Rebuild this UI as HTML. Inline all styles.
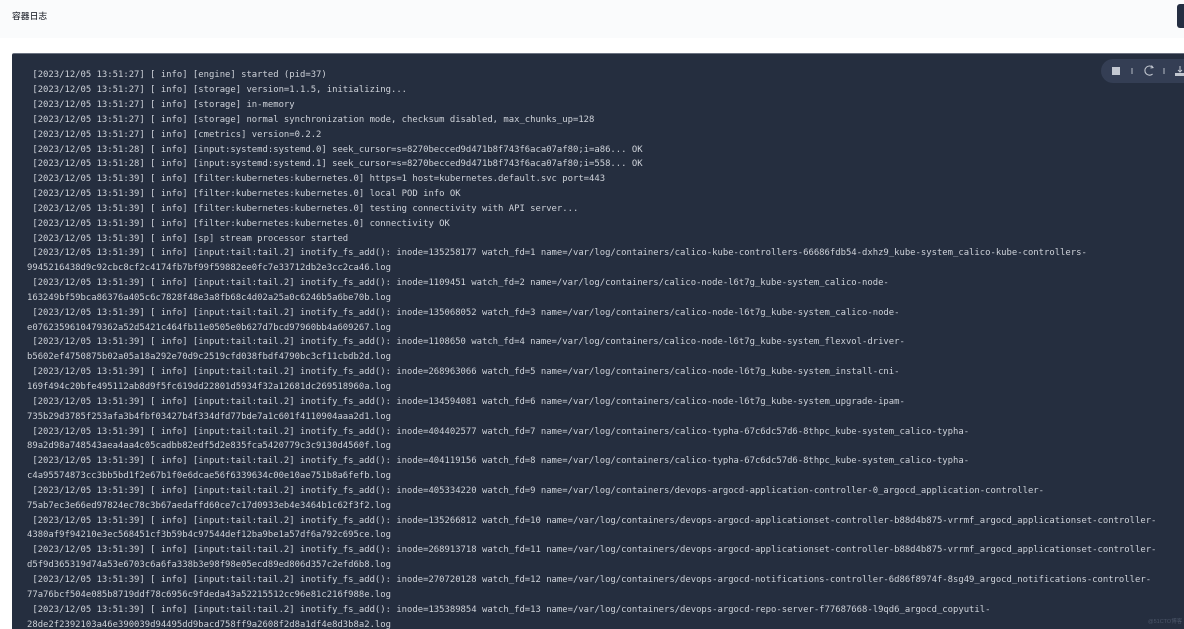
<!DOCTYPE html>
<html><head><meta charset="utf-8"><title>容器日志</title>
<style>
html,body{margin:0;padding:0;width:1184px;height:629px;overflow:hidden;background:#fff}
#hd{position:absolute;left:0;top:0;width:1184px;height:38px;background:#fafbfc}
#ttl{position:absolute;left:12px;top:10px;font:500 8.8px/13px "Liberation Sans","Noto Sans CJK SC",sans-serif;color:#30343c;filter:blur(.25px)}
#btn{position:absolute;left:1177px;top:4px;width:20px;height:24px;border-radius:3px;background:#242e42}
#panel{position:absolute;left:12px;top:53px;width:1172px;height:576px;background:#252e3f;border-radius:2px 0 0 0;border-top:1px solid #6b7280;box-sizing:border-box;overflow:hidden}
#log{position:absolute;left:15px;top:14.3px;margin:0;font:8.905px/14.84px "DejaVu Sans Mono","Liberation Mono",monospace;color:#ced2d9;white-space:pre;filter:blur(.3px)}
#tb{position:absolute;left:1101px;top:59px;width:95px;height:24px;border-radius:12px;background:#343e54}
#wm{position:absolute;left:1148px;top:618px;font:5.5px/8px "Liberation Sans","Noto Sans CJK SC",sans-serif;color:#4d576a}
svg{position:absolute;left:1101px;top:59px}
</style></head><body>
<div id="hd"></div>
<div id="ttl">容器日志</div>
<div id="btn"></div>
<div id="panel"><pre id="log"> [2023/12/05 13:51:27] [ info] [engine] started (pid=37)
 [2023/12/05 13:51:27] [ info] [storage] version=1.1.5, initializing...
 [2023/12/05 13:51:27] [ info] [storage] in-memory
 [2023/12/05 13:51:27] [ info] [storage] normal synchronization mode, checksum disabled, max_chunks_up=128
 [2023/12/05 13:51:27] [ info] [cmetrics] version=0.2.2
 [2023/12/05 13:51:28] [ info] [input:systemd:systemd.0] seek_cursor=s=8270becced9d471b8f743f6aca07af80;i=a86... OK
 [2023/12/05 13:51:28] [ info] [input:systemd:systemd.1] seek_cursor=s=8270becced9d471b8f743f6aca07af80;i=558... OK
 [2023/12/05 13:51:39] [ info] [filter:kubernetes:kubernetes.0] https=1 host=kubernetes.default.svc port=443
 [2023/12/05 13:51:39] [ info] [filter:kubernetes:kubernetes.0] local POD info OK
 [2023/12/05 13:51:39] [ info] [filter:kubernetes:kubernetes.0] testing connectivity with API server...
 [2023/12/05 13:51:39] [ info] [filter:kubernetes:kubernetes.0] connectivity OK
 [2023/12/05 13:51:39] [ info] [sp] stream processor started
 [2023/12/05 13:51:39] [ info] [input:tail:tail.2] inotify_fs_add(): inode=135258177 watch_fd=1 name=/var/log/containers/calico-kube-controllers-66686fdb54-dxhz9_kube-system_calico-kube-controllers-
9945216438d9c92cbc8cf2c4174fb7bf99f59882ee0fc7e33712db2e3cc2ca46.log
 [2023/12/05 13:51:39] [ info] [input:tail:tail.2] inotify_fs_add(): inode=1109451 watch_fd=2 name=/var/log/containers/calico-node-l6t7g_kube-system_calico-node-
163249bf59bca86376a405c6c7828f48e3a8fb68c4d02a25a0c6246b5a6be70b.log
 [2023/12/05 13:51:39] [ info] [input:tail:tail.2] inotify_fs_add(): inode=135068052 watch_fd=3 name=/var/log/containers/calico-node-l6t7g_kube-system_calico-node-
e0762359610479362a52d5421c464fb11e0505e0b627d7bcd97960bb4a609267.log
 [2023/12/05 13:51:39] [ info] [input:tail:tail.2] inotify_fs_add(): inode=1108650 watch_fd=4 name=/var/log/containers/calico-node-l6t7g_kube-system_flexvol-driver-
b5602ef4750875b02a05a18a292e70d9c2519cfd038fbdf4790bc3cf11cbdb2d.log
 [2023/12/05 13:51:39] [ info] [input:tail:tail.2] inotify_fs_add(): inode=268963066 watch_fd=5 name=/var/log/containers/calico-node-l6t7g_kube-system_install-cni-
169f494c20bfe495112ab8d9f5fc619dd22801d5934f32a12681dc269518960a.log
 [2023/12/05 13:51:39] [ info] [input:tail:tail.2] inotify_fs_add(): inode=134594081 watch_fd=6 name=/var/log/containers/calico-node-l6t7g_kube-system_upgrade-ipam-
735b29d3785f253afa3b4fbf03427b4f334dfd77bde7a1c601f4110904aaa2d1.log
 [2023/12/05 13:51:39] [ info] [input:tail:tail.2] inotify_fs_add(): inode=404402577 watch_fd=7 name=/var/log/containers/calico-typha-67c6dc57d6-8thpc_kube-system_calico-typha-
89a2d98a748543aea4aa4c05cadbb82edf5d2e835fca5420779c3c9130d4560f.log
 [2023/12/05 13:51:39] [ info] [input:tail:tail.2] inotify_fs_add(): inode=404119156 watch_fd=8 name=/var/log/containers/calico-typha-67c6dc57d6-8thpc_kube-system_calico-typha-
c4a95574873cc3bb5bd1f2e67b1f0e6dcae56f6339634c00e10ae751b8a6fefb.log
 [2023/12/05 13:51:39] [ info] [input:tail:tail.2] inotify_fs_add(): inode=405334220 watch_fd=9 name=/var/log/containers/devops-argocd-application-controller-0_argocd_application-controller-
75ab7ec3e66ed97824ec78c3b67aedaffd60ce7c17d0933eb4e3464b1c62f3f2.log
 [2023/12/05 13:51:39] [ info] [input:tail:tail.2] inotify_fs_add(): inode=135266812 watch_fd=10 name=/var/log/containers/devops-argocd-applicationset-controller-b88d4b875-vrrmf_argocd_applicationset-controller-
4380af9f94210e3ec568451cf3b59b4c97544def12ba9be1a57df6a792c695ce.log
 [2023/12/05 13:51:39] [ info] [input:tail:tail.2] inotify_fs_add(): inode=268913718 watch_fd=11 name=/var/log/containers/devops-argocd-applicationset-controller-b88d4b875-vrrmf_argocd_applicationset-controller-
d5f9d365319d74a53e6703c6a6fa338b3e98f98e05ecd89ed806d357c2efd6b8.log
 [2023/12/05 13:51:39] [ info] [input:tail:tail.2] inotify_fs_add(): inode=270720128 watch_fd=12 name=/var/log/containers/devops-argocd-notifications-controller-6d86f8974f-8sg49_argocd_notifications-controller-
77a76bcf504e085b8719ddf78c6956c9fdeda43a52215512cc96e81c216f988e.log
 [2023/12/05 13:51:39] [ info] [input:tail:tail.2] inotify_fs_add(): inode=135389854 watch_fd=13 name=/var/log/containers/devops-argocd-repo-server-f77687668-l9qd6_argocd_copyutil-
28de2f2392103a46e390039d94495dd9bacd758ff9a2608f2d8a1df4e8d3b8a2.log</pre></div>
<div id="tb"></div>
<svg width="83" height="24" viewBox="0 0 83 24" fill="none">
<rect x="11" y="8" width="8" height="8" fill="#c3c8d1"/>
<path d="M31 9v6M63 9v6" stroke="#b5bac5" stroke-width="1"/>
<path d="M52 8.6A4.6 4.6 0 1 0 51.6 15" stroke="#c3c8d1" stroke-width="1.1"/>
<path d="M50.5 6.5L52 8.6 49.5 9" stroke="#c3c8d1" stroke-width="1"/>
<path d="M79 7v6M77 11l2 2 2-2" stroke="#c3c8d1" stroke-width="1"/>
<rect x="74" y="14" width="9" height="3" fill="#c3c8d1"/>
</svg>
<div id="wm">@51CTO博客</div>
</body></html>
